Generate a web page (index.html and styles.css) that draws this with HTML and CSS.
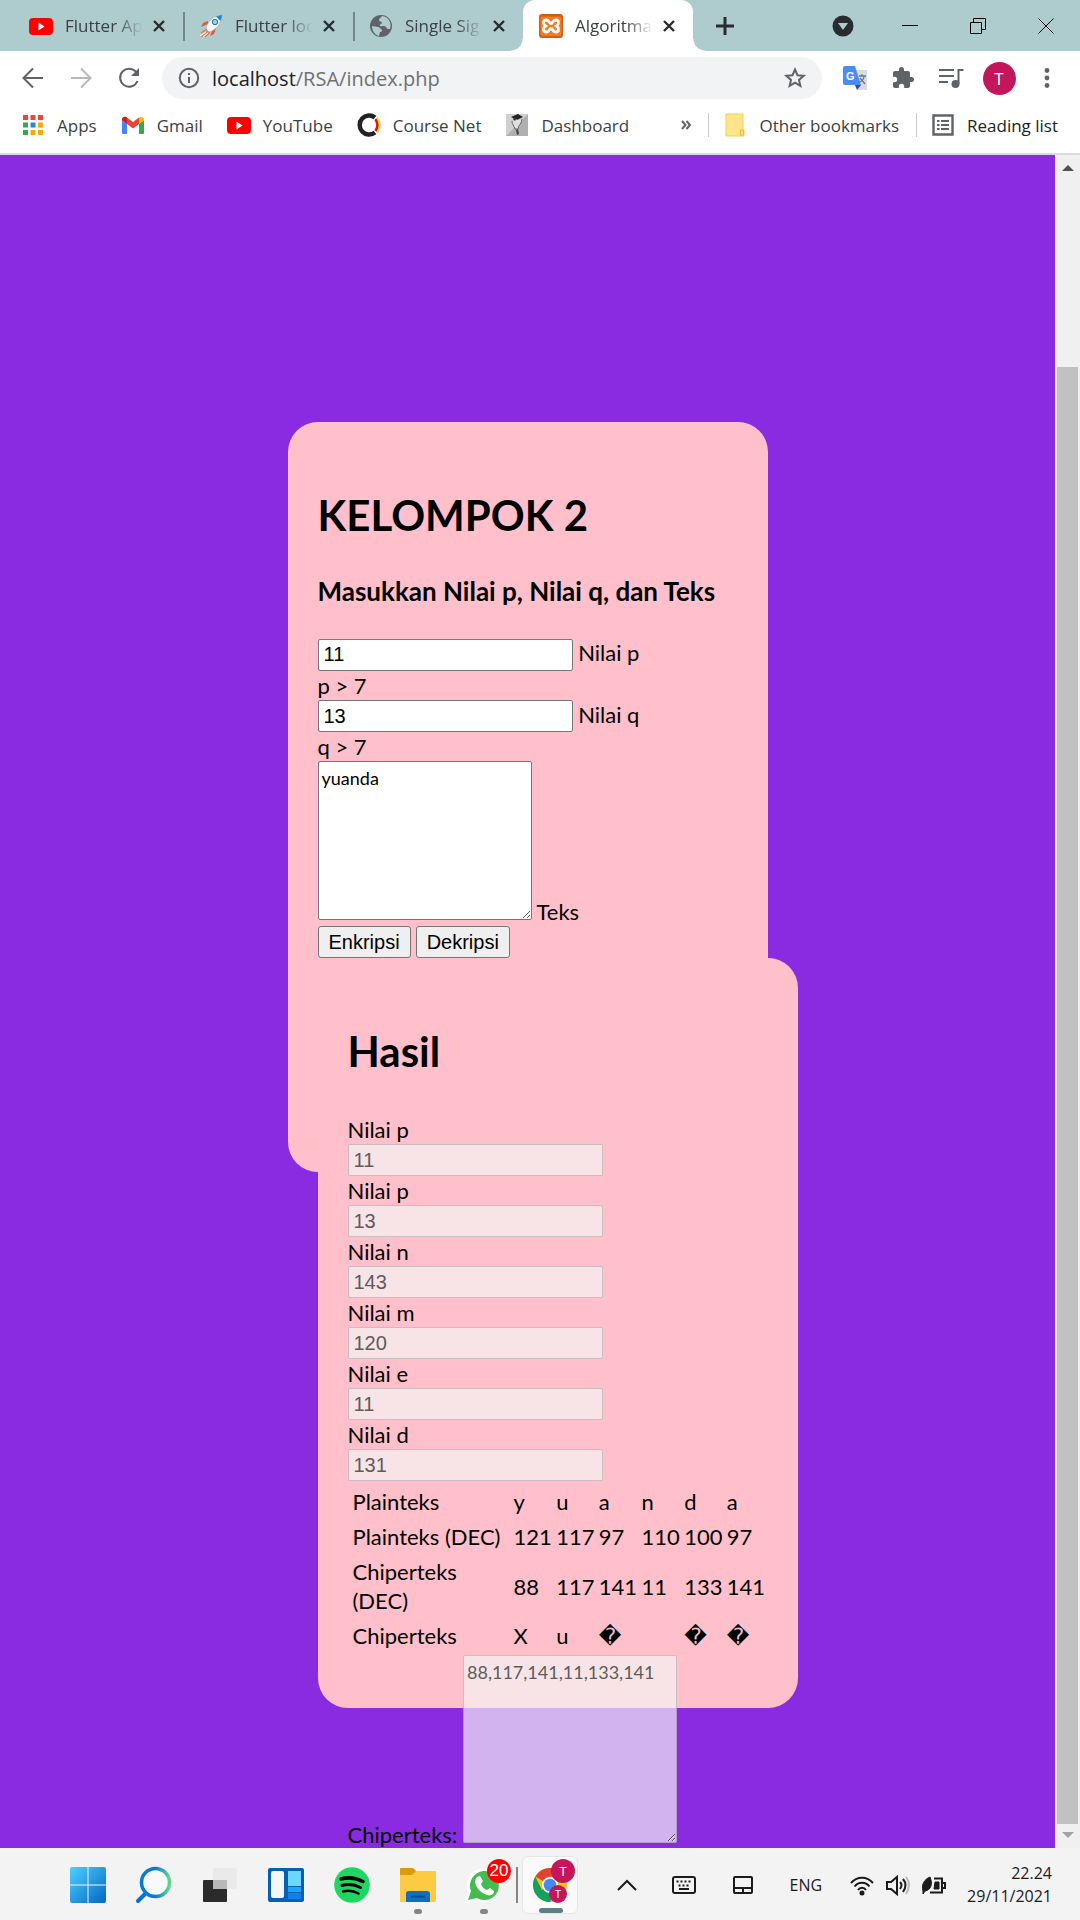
FILE: index.html
```html
<!DOCTYPE html>
<html lang="id">
<head>
<meta charset="utf-8">
<meta name="viewport" content="width=device-width, initial-scale=1">
<title>Algoritma RSA</title>
<link rel="stylesheet" href="styles.css">
</head>
<body>
<header class="browser">
  <div class="tabstrip">
    <div class="tab">
      <svg class="icon" viewBox="0 0 24 24"><rect y="4" width="24" height="17" rx="4" fill="#f00"/><path d="M9.500 8.500v8l6-4z" fill="#fff"/></svg>
      <span class="tab-title">Flutter Ap</span>
      <button class="tab-close" aria-label="Close tab"><svg viewBox="0 0 12 12"><path d="M1 1l10 10M11 1L1 11"/></svg></button>
    </div>
    <div class="tab">
      <svg class="icon" viewBox="0 0 24 24"><path d="M9 10L2 13l2-4 5-2zM14 15l-3 7 4-2 2-6z" fill="#df5838"/><path d="M7 15C8 8 14 2 23 1c-1 9-6 15-13 17z" fill="#f3f7fa" stroke="#9fb4c2" stroke-width=".6"/><path d="M17 2.500C19 1.500 21 1 23 1c0 2-.5 4-1.500 6z" fill="#2388cf"/><circle cx="16" cy="8" r="2.700" fill="#8fd0f5" stroke="#2871a8"/><path d="M8 15l-6 4M9 17l-7 6M11 18l-5 5" stroke="#e9704a" stroke-width="1.500"/><path d="M7 18l-6 4M9 19l-5 4" stroke="#fff"/></svg>
      <span class="tab-title">Flutter loc</span>
      <button class="tab-close" aria-label="Close tab"><svg viewBox="0 0 12 12"><path d="M1 1l10 10M11 1L1 11"/></svg></button>
    </div>
    <div class="tab">
      <svg class="icon" viewBox="0 0 24 24"><circle cx="12" cy="12" r="11" fill="#5f6368"/><path d="M3 12l6 1c2 0 2 2 3 2 2 1 1 3-1 3l-1 4C6 21 3 17 3 12zM13 2c-1 2-3 2-3 4s3 1 3 3c0 1-3 1-2 3 2 1 4-1 6 1 1 2 2 2 4 2 2-6-1-12-8-13z" fill="#aeccce"/></svg>
      <span class="tab-title">Single Sig</span>
      <button class="tab-close" aria-label="Close tab"><svg viewBox="0 0 12 12"><path d="M1 1l10 10M11 1L1 11"/></svg></button>
    </div>
    <div class="tab tab-active">
      <svg class="icon" viewBox="0 0 24 24"><rect width="24" height="24" rx="3" fill="#cf5f17"/><rect x="1.500" y="2.500" width="21" height="19.500" rx="2" fill="#f9791f"/><path d="M7.500 6C3.500 6 4 10.500 6.500 12 4 13.500 3.500 18 7.500 18c3 0 2.500-3.500 4.500-3.500s1.500 3.500 4.500 3.500c4 0 3.500-4.500 1-6C20 10.500 20.500 6 16.500 6c-3 0-2.500 3.500-4.500 3.500S10.500 6 7.500 6z" fill="none" stroke="#fff" stroke-width="2.800"/></svg>
      <span class="tab-title">Algoritma</span>
      <button class="tab-close" aria-label="Close tab"><svg viewBox="0 0 12 12"><path d="M1 1l10 10M11 1L1 11"/></svg></button>
    </div>
    <button class="new-tab" aria-label="New tab"><svg viewBox="0 0 18 18"><path d="M9 0v18M0 9h18" stroke="#292b2f" stroke-width="3"/></svg></button>
    <div class="window-buttons">
      <button class="search-tabs" aria-label="Search tabs"><svg viewBox="0 0 22 22"><circle cx="11" cy="11" r="10.500" fill="#292b2f"/><path d="M6 8h10l-5 7z" fill="#aeccce"/></svg></button>
      <button class="window-button" aria-label="Minimize"><svg viewBox="0 0 16 16"><path d="M0 7.500h16"/></svg></button>
      <button class="window-button" aria-label="Restore"><svg viewBox="0 0 16 16"><path d="M.5 4.500h11v11H.5zM3.500 4V.5h12v11H12"/></svg></button>
      <button class="window-button" aria-label="Close"><svg viewBox="0 0 16 16"><path d="M.5.5l15 15M15.500.5l-15 15"/></svg></button>
    </div>
  </div>

  <div class="toolbar">
    <button class="tool" aria-label="Back"><svg class="icon line" viewBox="0 0 24 24"><path d="M22 12H3M12 2.500L2.500 12l9.500 9.500"/></svg></button>
    <button class="tool tool-off" aria-label="Forward"><svg class="icon line" viewBox="0 0 24 24"><path d="M2 12h19M12 2.500l9.500 9.500-9.500 9.500"/></svg></button>
    <button class="tool" aria-label="Reload"><svg class="icon line" viewBox="0 0 24 24"><path d="M20.500 15a9 9 0 1 1-1-8.500"/><path d="M22 2v8h-8z" fill="#5f6368" stroke="none"/></svg></button>
    <div class="omnibox">
      <svg class="icon line" viewBox="0 0 24 24"><circle cx="12" cy="12" r="9.200"/><path d="M12 11v6M12 7v2"/></svg>
      <span class="url"><span class="host">localhost</span>/RSA/index.php</span>
      <button class="star" aria-label="Bookmark this page"><svg class="icon line" viewBox="0 0 24 24"><path d="M12 3.500l2.500 5.700 6.200.600-4.700 4.100 1.400 6L12 16.700l-5.400 3.200 1.400-6-4.700-4.100 6.200-.600z"/></svg></button>
    </div>
    <button class="tool" aria-label="Translate"><svg class="icon" viewBox="0 0 24 24"><path d="M10 4h14v20H15z" fill="#dadce0"/><path d="M0 2q0-2 2-2h10l6 19H2q-2 0-2-2z" fill="#4c8bf5"/><path d="M12 19h6l-4 5z" fill="#3349b3"/><text x="3" y="14" class="g-letter">G</text><path d="M16 10h7M19 8v2M21 10c0 3-2 5-4 6M17 12l5 6" stroke="#607d8b" stroke-width="1.300" fill="none"/></svg></button>
    <button class="tool" aria-label="Extensions"><svg class="icon" viewBox="0 0 24 24"><path d="M20.500 11H19V7c0-1.100-.900-2-2-2h-4V3.500a2.500 2.500 0 0 0-5 0V5H4c-1.100 0-2 .900-2 2v3.800h1.500a2.700 2.700 0 0 1 0 5.400H2V20c0 1.100.900 2 2 2h3.800v-1.500a2.700 2.700 0 0 1 5.400 0V22H17c1.100 0 2-.900 2-2v-4h1.500a2.500 2.500 0 0 0 0-5z" fill="#5f6368"/></svg></button>
    <button class="tool" aria-label="Media"><svg class="icon line" viewBox="0 0 24 24"><path d="M0 4h15M0 10h15M0 16h9M19.500 18V4h5"/><circle cx="16.500" cy="18" r="4" fill="#5f6368" stroke="none"/></svg></button>
    <button class="tool" aria-label="Profile"><span class="avatar">T</span></button>
    <button class="tool" aria-label="Menu"><svg class="icon" viewBox="0 0 24 24" fill="#5f6368"><circle cx="12" cy="4.500" r="2.400"/><circle cx="12" cy="12" r="2.400"/><circle cx="12" cy="19.500" r="2.400"/></svg></button>
  </div>

  <nav class="bookmarks">
    <a class="bookmark" href="#"><svg class="icon" viewBox="0 0 24 24"><path d="M2 2h5v5H2zM9.500 2h5v5h-5zM17 2h5v5h-5z" fill="#f44336"/><path d="M2 9.500h5v5H2zM2 17h5v5H2z" fill="#34a853"/><path d="M9.500 9.500h5v5h-5z" fill="#1e88e5"/><path d="M17 9.500h5v5h-5zM9.500 17h5v5h-5zM17 17h5v5h-5z" fill="#fba800"/></svg>Apps</a>
    <a class="bookmark" href="#"><svg class="icon" viewBox="0 0 24 24"><path d="M1 7l5 4v10H2q-1 0-1-1z" fill="#4285f4"/><path d="M18 11l5-4v13q0 1-1 1h-4z" fill="#34a853"/><path d="M1 7c0-3 3-4 5-2.500l6 4.500 6-4.500V11l-6 4.500L6 11z" fill="#ea4335"/><path d="M1 7c0-3 3-4 5-2.500V11z" fill="#c5221f"/><path d="M18 4.500C20 3 23 4 23 7l-5 4z" fill="#fbbc04"/></svg>Gmail</a>
    <a class="bookmark" href="#"><svg class="icon" viewBox="0 0 24 24"><rect y="4" width="24" height="17" rx="4" fill="#f00"/><path d="M9.500 8.500v8l6-4z" fill="#fff"/></svg>YouTube</a>
    <a class="bookmark" href="#"><svg class="icon" viewBox="0 0 24 24" fill="none"><path d="M18 4.500A9.500 9.500 0 1 0 18 19.500" stroke="#222" stroke-width="4.500"/><path d="M18.500 6a9.500 9.500 0 0 1 0 12" stroke="#e3122b" stroke-width="3"/><path d="M20 4.500a12 12 0 0 1 0 15" stroke="#f9d616" stroke-width="2"/></svg>Course Net</a>
    <a class="bookmark" href="#"><svg class="icon" viewBox="0 0 24 24"><rect x="1" y="1" width="22" height="22" fill="#d0d0d0"/><path d="M23 1v22H1z" fill="#b0b0b0"/><path d="M6 4l7-3 5 3-6 3zM8 5l1 3 5-1z" fill="#222"/><path d="M7 8c0 4 2 4 3 8h3c0-4 4-5 4-10" fill="#e0e0e0" stroke="#666"/><path d="M11 17l1 5 2-1-1-5z" fill="#444"/></svg>Dashboard</a>
    <div class="bookmarks-end">
      <button class="more" aria-label="More bookmarks"><svg viewBox="0 0 10 10"><path d="M1 1l3.500 4L1 9M5.500 1L9 5 5.500 9"/></svg></button>
      <a class="bookmark divided" href="#"><svg class="icon" viewBox="0 0 24 24"><path d="M3 1h17v16h1v6H3z" fill="#ffe58b" stroke="#f5cf47"/><path d="M17.500 22v-5h3v5z" fill="#ffe58b" stroke="#e9bd32"/></svg>Other bookmarks</a>
      <a class="bookmark divided reading" href="#"><svg class="icon" viewBox="0 0 24 24"><path d="M2.500 2.500h19v19h-19z" fill="none" stroke="#5f6368" stroke-width="2.400"/><path d="M6 8h2.500M10 8h8M6 12h2.500M10 12h8M6 16h2.500M10 16h8" stroke="#5f6368" stroke-width="2"/></svg>Reading list</a>
    </div>
  </nav>
</header>

<div class="viewport">
  <main class="page">
    <form class="card">
      <h1>KELOMPOK 2</h1>
      <h3>Masukkan Nilai p, Nilai q, dan Teks</h3>
      <div class="field"><input class="number" id="p" type="text" value="11"> <label for="p">Nilai p</label></div>
      <div class="hint">p &gt; 7</div>
      <div class="field"><input class="number" id="q" type="text" value="13"> <label for="q">Nilai q</label></div>
      <div class="hint">q &gt; 7</div>
      <div class="field"><textarea class="text" id="teks">yuanda</textarea> <label for="teks">Teks</label></div>
      <div class="actions"><button class="action" type="button">Enkripsi</button><button class="action" type="button">Dekripsi</button></div>

      <section class="card">
        <h1>Hasil</h1>
        <div class="results">
          <label for="rp">Nilai p</label><input class="number" id="rp" value="11" disabled>
          <label for="rq">Nilai p</label><input class="number" id="rq" value="13" disabled>
          <label for="rn">Nilai n</label><input class="number" id="rn" value="143" disabled>
          <label for="rm">Nilai m</label><input class="number" id="rm" value="120" disabled>
          <label for="re">Nilai e</label><input class="number" id="re" value="11" disabled>
          <label for="rd">Nilai d</label><input class="number" id="rd" value="131" disabled>
        </div>
        <table class="steps">
          <tr><th scope="row">Plainteks</th><td>y</td><td>u</td><td>a</td><td>n</td><td>d</td><td>a</td></tr>
          <tr><th scope="row">Plainteks (DEC)</th><td>121</td><td>117</td><td>97</td><td>110</td><td>100</td><td>97</td></tr>
          <tr><th scope="row">Chiperteks<br>(DEC)</th><td>88</td><td>117</td><td>141</td><td>11</td><td>133</td><td>141</td></tr>
          <tr><th scope="row">Chiperteks</th><td>X</td><td>u</td><td>&#xFFFD;</td><td></td><td>&#xFFFD;</td><td>&#xFFFD;</td></tr>
        </table>
        <div class="field"><label for="chiper">Chiperteks:</label> <textarea class="text text-tall" id="chiper" disabled>88,117,141,11,133,141</textarea></div>
      </section>
    </form>
  </main>
  <div class="scrollbar">
    <svg class="arrow" viewBox="0 0 12 6"><path d="M6 0l6 6H0z" fill="#505050"/></svg>
    <div class="thumb"></div>
    <svg class="arrow" viewBox="0 0 12 6"><path d="M0 0h12L6 6z" fill="#a3a3a3"/></svg>
  </div>
</div>

<footer class="taskbar">
  <button class="app" aria-label="Start"><svg viewBox="0 0 36 36"><defs><linearGradient id="win" gradientUnits="userSpaceOnUse" x1="0" y1="0" x2="36" y2="36"><stop offset="0" stop-color="#4fd0ff"/><stop offset="1" stop-color="#0067c4"/></linearGradient></defs><path d="M2 0h15.500v17.500H0V2q0-2 2-2zM18.500 0H34q2 0 2 2v15.500H18.500zM0 18.500h17.500V36H2q-2 0-2-2zM18.500 18.500H36V34q0 2-2 2H18.500z" fill="url(#win)"/></svg></button>
  <button class="app" aria-label="Search"><svg viewBox="0 0 36 36" fill="none"><defs><linearGradient id="ring"><stop offset=".5" stop-color="#0a78d4"/><stop offset="1" stop-color="#5ed989"/></linearGradient></defs><path d="M11 25l-9 9" stroke="#0a6fce" stroke-width="4" stroke-linecap="round"/><circle cx="19.500" cy="15.500" r="14" fill="#f8f9fb" stroke="url(#ring)" stroke-width="3.500"/></svg></button>
  <button class="app" aria-label="Task view"><svg viewBox="0 0 36 36"><rect x="1" y="13" width="24" height="22" rx="1" fill="#2b2b2b"/><rect x="11" y="1" width="24" height="21" rx="1" fill="#eaeaea"/><path d="M11 13h14v9H11z" fill="#b8b8b8"/></svg></button>
  <button class="app" aria-label="Widgets"><svg viewBox="0 0 36 36"><rect y="1" width="36" height="34" rx="2" fill="#075eb5"/><rect x="3" y="4" width="13" height="27" rx="2" fill="#f5f5f7"/><path d="M20 4h13v15H20z" fill="#6bd9ff"/><path d="M20 20h13v5H20z" fill="#18a5fb"/><path d="M20 26h13v6H20z" fill="#0b84ea"/></svg></button>
  <button class="app" aria-label="Spotify"><svg viewBox="0 0 36 36" fill="none" stroke="#000" stroke-linecap="round"><circle cx="18" cy="18" r="17.800" fill="#1ed760" stroke="none"/><path d="M7 12c7-2 15-1 22 2.500" stroke-width="3.600"/><path d="M8 18.500c6-1.700 13-1 18.500 2" stroke-width="3"/><path d="M9 24.500c5-1.400 10.500-1 15.500 2" stroke-width="2.500"/></svg></button>
  <button class="app running" aria-label="File Explorer"><svg viewBox="0 0 36 36"><path d="M0 2q0-1 1-1h12l4 4h19v5H0z" fill="#dc9c05"/><path d="M0 8h12l4-4h19q1 0 1 1v28q0 2-2 2H0z" fill="#fdcb43"/><path d="M6 35V27q0-3 3-3h18q3 0 3 3v8z" fill="#0d6fc4"/><path d="M11 29.500h14" stroke="#084a91" stroke-width="2"/></svg></button>
  <button class="app running" aria-label="WhatsApp"><svg viewBox="0 0 36 36"><path d="M-1 36l3-10A17 17 0 1 1 10 34z" fill="#fff"/><path d="M2 33l3-9A14.500 14.500 0 1 1 11 31z" fill="#43bd50"/><path d="M11 10l3-1 3 5-2 3c1 3 3 5 6 6l3-2 4 3c0 4-4 5-7 4-6-2-11-7-12-13q0-3 2-5z" fill="#fff"/></svg><span class="count">20</span></button>
  <button class="app current" aria-label="Google Chrome"><svg viewBox="0 0 36 36"><circle cx="18" cy="18" r="17" fill="#fbc116"/><path d="M18 18L3.300 9.500A17 17 0 0 1 32.700 9.500H18z" fill="#e34133"/><path d="M18 18L10 23 3.300 9.500A17 17 0 0 0 18 35l7-13z" fill="#16a05d"/><circle cx="18" cy="18" r="8" fill="#fff"/><circle cx="18" cy="18" r="6.300" fill="#4587f4"/></svg><span class="mini mini-large">T</span><span class="mini">T</span></button>
  <div class="tray">
    <div class="tray-tools">
      <svg class="glyph chevron" viewBox="0 0 20 24"><path d="M1 17l9-9 9 9"/></svg>
      <svg class="glyph" viewBox="0 0 24 24"><rect x="1" y="4" width="22" height="16" rx="2"/><path d="M4.500 8.500h15M6.500 12.500h11" stroke-dasharray="2 2"/><path d="M7 16h10"/></svg>
      <svg class="glyph" viewBox="0 0 24 24"><rect x="3" y="4" width="18" height="16" rx="1"/><path d="M3 15h18M12 15v5"/></svg>
      <span>ENG</span>
    </div>
    <div class="status">
      <svg class="glyph" viewBox="0 0 24 24"><path d="M1 10c6-7 16-7 22 0M4.500 13.500c4-5 11-5 15 0M8 17c2-3 6-3 8 0"/><circle cx="12" cy="20" r="1.500" fill="#1b1b1b"/></svg>
      <svg class="glyph" viewBox="0 0 24 24"><path d="M1 9v7h4l6 5V4L5 9zM14 9q3 3 0 7M17 6q5 6 0 13"/><path d="M20 4q6 8 0 17" stroke="#bbb"/></svg>
      <svg class="glyph" viewBox="0 0 24 24"><path d="M12 5.500h8v14H8M21 10h2v5h-2"/><path d="M1 18C-1 11 3 6 8 4c3 7 1 13-5 14l-2 3zM13 9h4v7h-5z" fill="#1b1b1b" stroke-width="1"/></svg>
    </div>
    <div class="clock"><time>22.24</time><time>29/11/2021</time></div>
  </div>
</footer>
</body>
</html>
```

FILE: styles.css
```css
* { box-sizing: border-box; }

body {
  margin: 0;
  height: 100vh;
  display: flex;
  flex-direction: column;
  overflow: hidden;
  font-family: "Open Sans", "Noto Sans", sans-serif;
  font-size: 17px;
  color: #3c4043;
}

svg { display: block; overflow: visible; }
a { color: inherit; text-decoration: none; }

button {
  margin: 0;
  padding: 0;
  border: 0;
  background: none;
  font: inherit;
  color: inherit;
}

.icon { width: 24px; height: 24px; flex: none; }
.line { fill: none; stroke: #5f6368; stroke-width: 2; }

/* Browser frame */
.browser { flex: none; background: #fff; border-bottom: 2px solid #d9dadc; }

.tabstrip {
  display: flex;
  align-items: center;
  height: 51px;
  padding-left: 13px;
  background: #aeccce;
}

.tab {
  position: relative;
  display: flex;
  align-items: center;
  width: 170px;
  height: 51px;
  padding: 0 16px;
}

.tab + .tab:not(.tab-active)::before {
  content: "";
  width: 2px;
  height: 29px;
  position: absolute;
  left: 0;
  top: 12px;
  background: #748789;
}

.tab-title {
  flex: 1;
  margin: 0 8px 0 12px;
  overflow: hidden;
  white-space: nowrap;
  -webkit-mask-image: linear-gradient(90deg, #000 65%, transparent);
  mask-image: linear-gradient(90deg, #000 65%, transparent);
}

.tab-close svg { width: 12px; height: 12px; fill: none; stroke: #292b2f; stroke-width: 2.4; }
.tab-close { flex: none; padding: 2px; }

.tab-active { background: #fff; border-radius: 12px 12px 0 0; }
.tab-active::before, .tab-active::after {
  content: "";
  position: absolute;
  bottom: 0;
  width: 12px;
  height: 12px;
}
.tab-active::before { right: 100%; background: radial-gradient(circle at 0 0, transparent 11px, #fff 12px); }
.tab-active::after { left: 100%; background: radial-gradient(circle at 100% 0, transparent 11px, #fff 12px); }

.new-tab { margin-left: 23px; }
.new-tab svg { width: 18px; height: 18px; }

.window-buttons { display: flex; align-items: center; margin-left: auto; }
.search-tabs { margin-right: 22px; }
.search-tabs svg { width: 22px; height: 22px; }
.window-button { width: 68px; padding: 0 26px; height: 24px; }
.window-button svg { width: 16px; height: 16px; fill: none; stroke: #000; stroke-width: 1; }

.toolbar {
  display: flex;
  align-items: center;
  padding: 6px 9px 0;
}

.tool { width: 48px; display: flex; justify-content: center; }
.tool-off { opacity: .45; }

.omnibox {
  flex: 1;
  display: flex;
  align-items: center;
  gap: 11px;
  height: 42px;
  margin: 0 9px;
  padding: 0 15px;
  border-radius: 21px;
  background: #f1f3f4;
}

.url { flex: 1; font-size: 20px; color: #6d7175; }
.host { color: #202124; }

.g-letter { font: bold 11px "Liberation Sans", sans-serif; fill: #fff; }

.avatar {
  width: 33px;
  height: 33px;
  border-radius: 50%;
  background: #c2185b;
  color: #fff;
  font-size: 17px;
  line-height: 33px;
  text-align: center;
}

.bookmarks {
  display: flex;
  align-items: center;
  gap: 24px;
  height: 54px;
  padding: 0 22px 2px 21px;
  white-space: nowrap;
}

.bookmark { display: flex; align-items: center; gap: 12px; }
.bookmarks-end { display: flex; align-items: center; gap: 17px; margin-left: auto; }
.more svg { width: 10px; height: 10px; fill: none; stroke: #5f6368; stroke-width: 2; }
.divided { padding-left: 15px; background: linear-gradient(#c9cbce, #c9cbce) 0 50% / 1px 24px no-repeat; }
.reading { color: #202124; }

/* Web page */
.viewport { flex: 1; min-height: 0; display: flex; }

.page {
  flex: 1;
  min-width: 0;
  display: flex;
  justify-content: center;
  align-items: flex-start;
  padding-top: 267px;
  overflow: hidden;
  background: blueviolet;
  color: #000;
  font-family: Lato, "DejaVu Sans", sans-serif;
  font-size: 22px;
  line-height: 29px;
}

.card {
  flex: none;
  width: 480px;
  height: 750px;
  padding: 30px;
  border-radius: 30px;
  background: pink;
}

h1 { margin: 34px 0 30px; font-size: 42px; line-height: 58px; }
h3 { margin: 0 0 29px; font-size: 26px; line-height: 35px; white-space: nowrap; }

.number {
  width: 255px;
  height: 32px;
  margin: 0;
  padding: 0 5px;
  border: 1px solid #767676;
  border-radius: 2px;
  background: #fff;
  color: #000;
  font: 20px "Liberation Sans", Arial, sans-serif;
}

.text {
  width: 214px;
  height: 159px;
  margin: 0;
  padding: 4px 3px;
  border: 1px solid #767676;
  border-radius: 2px;
  background: #fff;
  color: #000;
  font: 18px/25px Lato, sans-serif;
}
.text-tall { height: 188px; }

.number:disabled, .text:disabled {
  border-color: rgba(118, 118, 118, .35);
  background: rgba(245, 245, 245, .68);
  color: #5c5c5c;
}

.field { white-space: nowrap; }

.actions { display: flex; gap: 5px; }
.action {
  height: 32px;
  padding: 0 10px;
  border: 1px solid #767676;
  border-radius: 3px;
  background: #efefef;
  color: #000;
  font: 20px "Liberation Sans", Arial, sans-serif;
}

.results { display: flex; flex-direction: column; align-items: flex-start; padding-top: 5px; }

.steps {
  width: 420px;
  margin-top: 2px;
  table-layout: fixed;
  border-spacing: 3px;
}
.steps th, .steps td { padding: 1px 0 2px 2px; text-align: left; font-weight: 400; white-space: nowrap; }
.steps th { width: 158px; }

.scrollbar {
  flex: none;
  width: 25px;
  display: flex;
  flex-direction: column;
  align-items: center;
  padding: 10px 0;
  background: #f0f0f0;
}
.arrow { width: 12px; height: 6px; flex: none; }
.thumb { flex: 1; width: 21px; margin: 196px 0 8px; background: #c1c1c1; }

/* Taskbar */
.taskbar {
  flex: none;
  display: flex;
  align-items: center;
  height: 72px;
  padding: 2px 28px 0 55px;
  background: #f3f3f3;
  color: #1b1b1b;
}

.app {
  position: relative;
  flex: none;
  width: 66px;
  height: 58px;
  display: flex;
  justify-content: center;
  align-items: center;
}
.app svg { width: 36px; height: 36px; }

.app::after {
  position: absolute;
  bottom: 0;
  left: 29px;
  width: 8px;
  height: 5px;
  border-radius: 3px;
  background: #858585;
}
.running::after { content: ""; }

.current { width: 56px; margin: 0 5px; border: 1px solid #e5e5e5; border-radius: 6px; background: #fafafa; }
.current::before { content: ""; position: absolute; left: -7px; top: 10px; width: 2px; height: 36px; background: #858585; }
.current::after { content: ""; left: 16px; width: 24px; background: #5f7f83; }

.count {
  position: absolute;
  top: 3px;
  right: 6px;
  width: 24px;
  height: 24px;
  border-radius: 50%;
  background: #f00;
  color: #fff;
  font: 17px/24px "Liberation Sans", Arial, sans-serif;
  text-align: center;
}

.mini {
  position: absolute;
  right: 10px;
  bottom: 10px;
  width: 18px;
  height: 18px;
  border-radius: 50%;
  background: #c2185b;
  color: #fff;
  font-size: 11px;
  line-height: 18px;
  text-align: center;
}
.mini-large { right: 2px; bottom: 30px; width: 24px; height: 24px; font-size: 13px; line-height: 24px; }

.tray { display: flex; align-items: center; gap: 21px; margin-left: auto; font-size: 16px; }
.tray-tools { display: flex; align-items: center; gap: 35px; margin-right: 7px; }
.status { display: flex; gap: 12px; }
.glyph { width: 24px; height: 24px; fill: none; stroke: #1b1b1b; stroke-width: 2; }
.chevron { width: 20px; }
.clock { display: flex; flex-direction: column; align-items: flex-end; line-height: 23px; }
```
